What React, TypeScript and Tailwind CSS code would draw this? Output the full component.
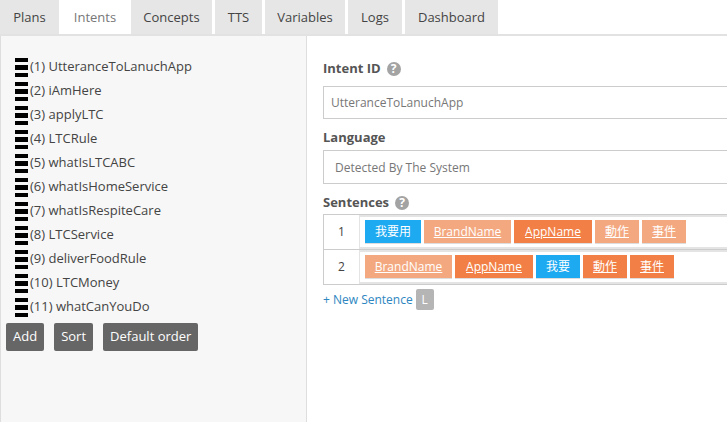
import React from 'react';
import { clsx } from 'clsx';

const tabs = [
  { name: 'Plans', width: 'w-[59px]' },
  { name: 'Intents', width: 'w-[66px]' },
  { name: 'Concepts', width: 'w-[81px]' },
  { name: 'TTS', width: 'w-[47px]' },
  { name: 'Variables', width: 'w-[80px]' },
  { name: 'Logs', width: 'w-[54px]' },
  { name: 'Dashboard', width: 'w-[93px]' },
];
const intents = [
  'UtteranceToLanuchApp',
  'iAmHere',
  'applyLTC',
  'LTCRule',
  'whatIsLTCABC',
  'whatIsHomeService',
  'whatIsRespiteCare',
  'LTCService',
  'deliverFoodRule',
  'LTCMoney',
  'whatCanYouDo',
];

type Kind = 'blue' | 'light' | 'dark';
const widths: Record<string, string> = {
  我要用: 'w-[56px]',
  我要: 'w-[44px]',
  BrandName: 'w-[87px] text-[12.5px]',
  AppName: 'w-[78px] text-[12.5px]',
  動作: 'w-[44px]',
  事件: 'w-[44px]',
};
const sentences: { text: string; kind: Kind }[][] = [
  [
    { text: '我要用', kind: 'blue' },
    { text: 'BrandName', kind: 'light' },
    { text: 'AppName', kind: 'dark' },
    { text: '動作', kind: 'light' },
    { text: '事件', kind: 'light' },
  ],
  [
    { text: 'BrandName', kind: 'light' },
    { text: 'AppName', kind: 'dark' },
    { text: '我要', kind: 'blue' },
    { text: '動作', kind: 'dark' },
    { text: '事件', kind: 'dark' },
  ],
];

const Help = () => (
  <span className="ml-[6px] flex h-[14px] w-[14px] items-center justify-center rounded-full bg-[#a3a3a3] text-[12px] font-bold leading-none text-white">
    ?
  </span>
);

const Handle = () => (
  <span className="mr-[2px] flex w-[13px] flex-col gap-[3px]">
    <span className="h-[4px] bg-black" />
    <span className="h-[5px] bg-black" />
    <span className="h-[4px] bg-black" />
  </span>
);

export default function App() {
  return (
    <div className="flex h-[422px] w-[727px] flex-col overflow-hidden bg-white font-['Open_Sans','Noto_Sans_CJK_TC',sans-serif] text-[13px] text-[#444]">
      <div className="flex h-[36px] shrink-0 gap-[3px] border-b-2 border-[#e2e2e2]">
        {tabs.map((t) => (
          <div
            key={t.name}
            className={clsx(
              'flex h-[34px] items-center justify-center pt-[1px]',
              t.width,
              t.name === 'Intents' ? 'bg-white text-[#777]' : 'bg-[#e6e6e6] text-[#444]'
            )}
          >
            {t.name}
          </div>
        ))}
      </div>

      <div className="flex min-h-0 flex-1">
        <div className="w-[307px] shrink-0 border-x border-[#dedede] bg-[#f7f7f7] pt-[19px]">
          <ul className="pl-[14px]">
            {intents.map((name, i) => (
              <li key={name} className="flex h-[24px] items-center">
                <Handle />
                <span>
                  ({i + 1}) {name}
                </span>
              </li>
            ))}
          </ul>
          <div className="mt-[4px] flex gap-[10px] pl-[5px]">
            <button className="h-[28px] rounded-[2px] bg-[#666] px-[7px] text-[13px] text-white">Add</button>
            <button className="h-[28px] rounded-[2px] bg-[#666] px-[7px] text-[13px] text-white">Sort</button>
            <button className="h-[28px] rounded-[2px] bg-[#666] px-[7px] text-[13px] text-white">Default order</button>
          </div>
        </div>

        <div className="min-w-0 flex-1 pl-[16px] pt-[23px]">
          <div className="flex h-[20px] items-center font-bold text-[#555]">
            Intent ID
            <Help />
          </div>
          <div className="mt-[7px] flex h-[33px] w-[420px] items-center border border-[#ccc] pl-[7px] text-[12px] text-[#777]">
            UtteranceToLanuchApp
          </div>
          <div className="mt-[9px] flex h-[20px] items-center font-bold text-[#555]">Language</div>
          <div className="mt-[2px] flex h-[34px] w-[420px] items-center border border-[#ccc] pl-[11px] pt-[1px] text-[12px] text-[#777]">
            Detected By The System
          </div>
          <div className="mt-[9px] flex h-[20px] items-center font-bold text-[#555]">
            Sentences
            <Help />
          </div>
          <div className="mt-[1px] w-[420px] border border-[#ccc]">
            {sentences.map((row, i) => (
              <div key={i} className={clsx('flex h-[34px]', i === 0 && 'box-content border-b border-[#ccc]')}>
                <div className="flex w-[35px] shrink-0 items-center justify-center text-[12px]">{i + 1}</div>
                <div className="flex flex-1 gap-[3px] border-y-2 border-l border-[#e4e4e4] pl-[5px] pt-[3px]">
                  {row.map((tag, j) => (
                    <span
                      key={j}
                      className={clsx(
                        'flex h-[23px] items-center justify-center text-[12px] text-white shadow-[0_1px_0_#ddd]',
                        widths[tag.text],
                        tag.kind === 'blue' && 'bg-[#1eaaf1]',
                        tag.kind === 'light' && 'bg-[#f4a880] underline',
                        tag.kind === 'dark' && 'bg-[#f27f46] underline'
                      )}
                    >
                      {tag.text}
                    </span>
                  ))}
                </div>
              </div>
            ))}
          </div>
          <div className="mt-[4px] flex items-center text-[12px] text-[#2e86c1]">
            + New Sentence
            <span className="ml-[3px] flex h-[21px] w-[18px] items-center justify-center rounded-[2px] bg-[#b5b5b5] text-white">
              L
            </span>
          </div>
        </div>
      </div>
    </div>
  );
}
